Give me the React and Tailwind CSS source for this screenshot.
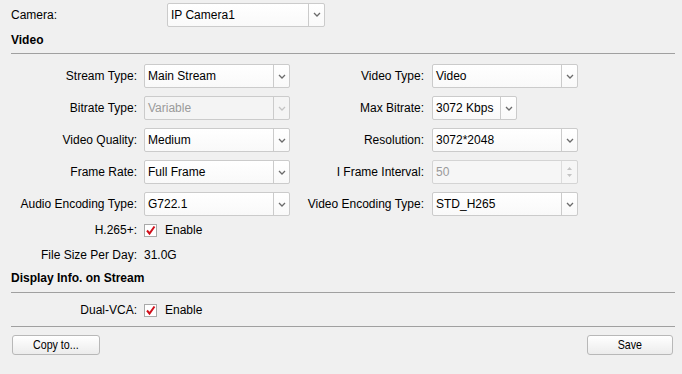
import React from "react";

const font = { fontFamily: '"Liberation Sans", Arial, sans-serif' };

function Chevron({ disabled }) {
  return (
    <svg width="8" height="5" viewBox="0 0 8 5" className="block">
      <path
        d="M1 1 L4 4 L7 1"
        fill="none"
        stroke={disabled ? "#c4c4c4" : "#6b6b6b"}
        strokeWidth="1.3"
      />
    </svg>
  );
}

function Select({ value, width = "w-[146px]", disabled }) {
  return (
    <div
      className={`${width} h-[24px] flex items-stretch rounded-[2px] border border-[#cbcbcb] ${
        disabled ? "bg-[#f4f4f4] text-[#9a9a9a]" : "bg-gradient-to-b from-white to-[#f9f9f9] text-black"
      }`}
    >
      <div className="flex-1 flex items-center pl-[3px] leading-none">{value}</div>
      <div className="w-[16px] border-l border-[#cbcbcb] flex items-center justify-center">
        <Chevron disabled={disabled} />
      </div>
    </div>
  );
}

function Spinner({ value }) {
  return (
    <div className="w-[146px] h-[24px] flex items-stretch rounded-[2px] border border-[#d4d4d4] bg-[#f6f6f6] text-[#9a9a9a]">
      <div className="flex-1 flex items-center pl-[3px] leading-none">{value}</div>
      <div className="w-[16px] border-l border-[#dcdcdc] flex flex-col items-center justify-center gap-[4px]">
        <svg width="5" height="3" viewBox="0 0 5 3" className="block">
          <path d="M0 3 L2.5 0 L5 3 Z" fill="#c4c4c4" />
        </svg>
        <svg width="5" height="3" viewBox="0 0 5 3" className="block">
          <path d="M0 0 L2.5 3 L5 0 Z" fill="#c4c4c4" />
        </svg>
      </div>
    </div>
  );
}

function Check() {
  return (
    <div className="w-[13px] h-[13px] border border-[#a9a9a9] bg-white flex items-center justify-center">
      <svg width="11" height="11" viewBox="0 0 11 11" className="block">
        <path d="M2 5.5 L4.5 8.5 L9.5 1.5" fill="none" stroke="#d0101b" strokeWidth="2" />
      </svg>
    </div>
  );
}

function Row({ left, leftField, right, rightField }) {
  return (
    <div className="flex items-center h-[32px]">
      <div className="w-[133px] pr-[7px] text-right">{left}</div>
      {leftField}
      <div className="w-[142px] pr-[8px] text-right">{right}</div>
      {rightField}
    </div>
  );
}

function CheckRow({ label }) {
  return (
    <div className="flex items-center h-[20px]">
      <div className="w-[133px] pr-[7px] text-right">{label}</div>
      <Check />
      <span className="ml-[8px]">Enable</span>
    </div>
  );
}

function Button({ children, width }) {
  return (
    <button
      className={`${width} h-[20px] rounded-[3px] border border-[#b8b8b8] bg-gradient-to-b from-white to-[#ececec] flex items-center justify-center text-black`}
    >
      <span className="inline-block scale-x-[0.82] text-[13px]">{children}</span>
    </button>
  );
}

export default function App() {
  return (
    <div className="w-[682px] h-[374px] bg-[#f0f0f0] text-[12px] text-black overflow-hidden" style={font}>
      <div className="pl-[11px] pr-[7px]">
        {/* camera */}
        <div className="flex items-center h-[29px]">
          <div className="w-[156px]">Camera:</div>
          <Select value="IP Camera1" width="w-[158px]" />
        </div>

        <div className="mt-[1px] h-[20px] flex items-center font-bold">Video</div>
        <div className="mt-[3px] border-t border-[#a0a0a0]" />

        <div className="mt-[6px]">
          <Row
            left="Stream Type:"
            leftField={<Select value="Main Stream" />}
            right="Video Type:"
            rightField={<Select value="Video" />}
          />
          <Row
            left="Bitrate Type:"
            leftField={<Select value="Variable" disabled />}
            right="Max Bitrate:"
            rightField={<Select value="3072 Kbps" width="w-[85px]" />}
          />
          <Row
            left="Video Quality:"
            leftField={<Select value="Medium" />}
            right="Resolution:"
            rightField={<Select value="3072*2048" />}
          />
          <Row
            left="Frame Rate:"
            leftField={<Select value="Full Frame" />}
            right="I Frame Interval:"
            rightField={<Spinner value="50" />}
          />
          <Row
            left="Audio Encoding Type:"
            leftField={<Select value="G722.1" />}
            right="Video Encoding Type:"
            rightField={<Select value="STD_H265" />}
          />
        </div>

        <CheckRow label="H.265+:" />
        <div className="mt-[5px] flex items-center h-[20px]">
          <div className="w-[133px] pr-[7px] text-right">File Size Per Day:</div>
          <span>31.0G</span>
        </div>

        <div className="mt-[3px] h-[20px] flex items-center font-bold">Display Info. on Stream</div>
        <div className="mt-[4px] border-t border-[#a0a0a0]" />

        <div className="mt-[7px]">
          <CheckRow label="Dual-VCA:" />
        </div>
        <div className="mt-[6px] border-t border-[#a0a0a0]" />

        <div className="mt-[8px] flex justify-between pl-[1px] pr-[2px]">
          <Button width="w-[88px]">Copy to...</Button>
          <Button width="w-[86px]">Save</Button>
        </div>
      </div>
    </div>
  );
}
